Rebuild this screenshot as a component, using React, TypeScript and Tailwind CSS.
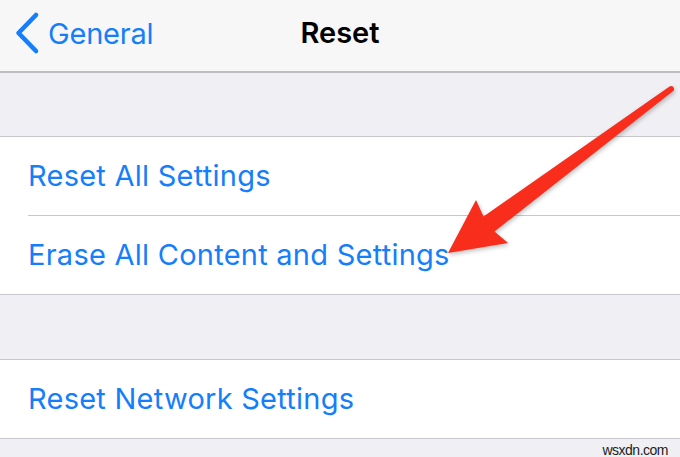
import React from 'react'

const rows = [['Reset All Settings', 'Erase All Content and Settings'], ['Reset Network Settings']]

function Chevron() {
  return (
    <svg width="40" height="66" viewBox="0 0 40 66" className="shrink-0">
      <polyline
        points="36,14 18.5,32 36,50"
        fill="none"
        stroke="#157efb"
        strokeWidth="4.6"
        strokeLinecap="round"
        strokeLinejoin="round"
      />
    </svg>
  )
}

function Arrow() {
  // tapered red annotation arrow drawn over the list
  return (
    <svg
      width="680"
      height="457"
      viewBox="0 0 680 457"
      className="absolute inset-0 pointer-events-none"
      style={{ filter: 'drop-shadow(1px 2px 2px rgba(0,0,0,0.25))' }}
    >
      <path
        d="M448 253 L476 200 L483.5 216.5 L669.5 86.5 Q673 85 674 88.5 Q674.5 91 672.5 91.5 L494.5 231.5 L508 243 Z"
        fill="#f82d1b"
      />
    </svg>
  )
}

export default function App() {
  return (
    <div className="relative w-[680px] h-[457px] overflow-hidden bg-[#efeff4]" style={{ fontFamily: 'Inter, "Noto Sans", sans-serif' }}>
      {/* Nav bar */}
      <div className="h-[73px] bg-[#f7f7f7] border-b-2 border-[#bdbdc0] relative flex items-center">
        <div className="flex items-center h-full pb-[4px]">
          <Chevron />
          <span className="text-[#157efb] text-[29px] ml-[8px] tracking-[-0.2px]">General</span>
        </div>
        <div className="absolute inset-0 flex items-center justify-center pb-[6px]">
          <span className="text-black text-[29px] font-semibold tracking-[0px]">Reset</span>
        </div>
      </div>

      {rows.map((group, gi) => (
        <div key={gi}>
          <div className={gi === 0 ? 'h-[64px] border-b border-[#c8c7cc]' : 'h-[65px] border-b border-[#c8c7cc]'} />
          <div className="bg-white border-b border-[#c8c7cc]">
            {group.map((label, i) => (
              <div key={label} className="pl-[28px]">
                <div className={i < group.length - 1 ? 'h-[79px] flex items-center border-b border-[#c8c7cc]' : 'h-[78px] flex items-center'}>
                  <span className="text-[#157efb] text-[29px] tracking-[0.25px]">{label}</span>
                </div>
              </div>
            ))}
          </div>
        </div>
      ))}

      <div className="flex justify-end pr-[12px] pt-[1px]">
        <span className="text-[#222] text-[14px] tracking-[-0.5px]" style={{ fontFamily: '"Liberation Sans", Arial, sans-serif' }}>
          wsxdn.com
        </span>
      </div>

      <Arrow />
    </div>
  )
}
